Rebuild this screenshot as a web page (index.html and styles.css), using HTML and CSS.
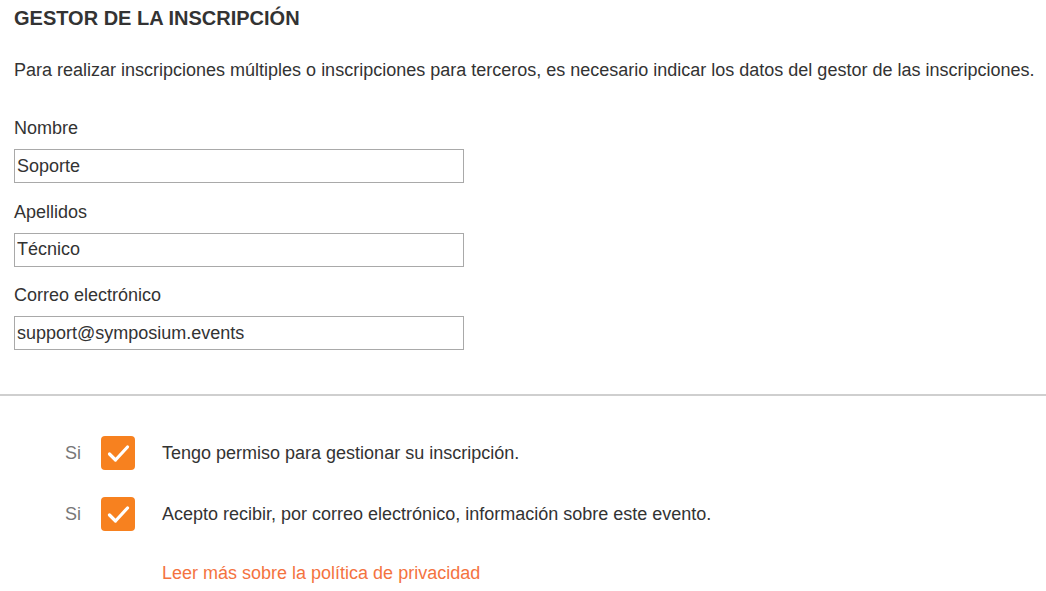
FILE: index.html
```html
<!DOCTYPE html>
<html lang="es">
<head>
<meta charset="utf-8">
<title>Gestor de la inscripción</title>
<link rel="stylesheet" href="styles.css">
</head>
<body>
<section class="form">
  <h2 class="title">GESTOR DE LA INSCRIPCIÓN</h2>
  <p class="intro">Para realizar inscripciones múltiples o inscripciones para terceros, es necesario indicar los datos del gestor de las inscripciones.</p>
  <div class="field">
    <label class="label" for="nombre">Nombre</label>
    <input class="input" id="nombre" type="text" value="Soporte">
  </div>
  <div class="field">
    <label class="label" for="apellidos">Apellidos</label>
    <input class="input" id="apellidos" type="text" value="Técnico">
  </div>
  <div class="field">
    <label class="label" for="correo">Correo electrónico</label>
    <input class="input" id="correo" type="text" value="support@symposium.events">
  </div>
</section>
<div class="divider"></div>
<section class="consents">
  <div class="row">
    <span class="si">Si</span>
    <svg class="box" width="34" height="34" viewBox="0 0 34 34"><rect x="0" y="0" width="34" height="34" rx="4" fill="#f7811f"/><polyline points="8.5,18 14.5,24 26.5,11" fill="none" stroke="#fff" stroke-width="3.2" stroke-linecap="round" stroke-linejoin="round"/></svg>
    <span class="text">Tengo permiso para gestionar su inscripción.</span>
  </div>
  <div class="row">
    <span class="si">Si</span>
    <svg class="box" width="34" height="34" viewBox="0 0 34 34"><rect x="0" y="0" width="34" height="34" rx="4" fill="#f7811f"/><polyline points="8.5,18 14.5,24 26.5,11" fill="none" stroke="#fff" stroke-width="3.2" stroke-linecap="round" stroke-linejoin="round"/></svg>
    <span class="text">Acepto recibir, por correo electrónico, información sobre este evento.</span>
  </div>
  <a class="link" href="#">Leer más sobre la política de privacidad</a>
</section>
</body>
</html>
```
FILE: styles.css
```css
html, body {
  margin: 0;
  padding: 0;
  background: #fff;
}
body {
  font-family: "Liberation Sans", Arial, sans-serif;
  color: #333;
  font-size: 18px;
}
.form {
  padding: 7px 4px 25.5px 14px;
}
.title {
  margin: 0 0 30px;
  font-size: 20px;
  line-height: 23px;
  font-weight: bold;
  color: #333;
}
.intro {
  margin: 0 0 37px;
  font-size: 18px;
  line-height: 21px;
}
.field {
  display: flex;
  flex-direction: column;
  align-items: flex-start;
  margin-bottom: 18.5px;
}
.label {
  font-size: 18px;
  line-height: 21px;
  margin-bottom: 10px;
}
.input {
  box-sizing: border-box;
  width: 450px;
  height: 34px;
  margin: 0;
  padding: 0 2px;
  border: 1px solid #a9a9a9;
  border-radius: 0;
  font-family: "Liberation Sans", Arial, sans-serif;
  font-size: 18px;
  color: #333;
  background: #fff;
  outline: none;
}
.divider {
  height: 2px;
  background: #cfcfcf;
}
.consents {
  padding: 40px 0 0 65px;
  display: flex;
  flex-direction: column;
  align-items: flex-start;
}
.row {
  display: flex;
  align-items: center;
  height: 34px;
  margin-bottom: 27px;
}
.row:nth-of-type(2) {
  margin-bottom: 0;
}
.si {
  width: 36px;
  color: #777;
  line-height: 21px;
}
.box {
  display: block;
  flex: none;
  margin-right: 27px;
}
.text {
  line-height: 21px;
  color: #333;
}
.link {
  margin: 32px 0 0 97px;
  line-height: 21px;
  color: #f4733f;
  text-decoration: none;
}
```
